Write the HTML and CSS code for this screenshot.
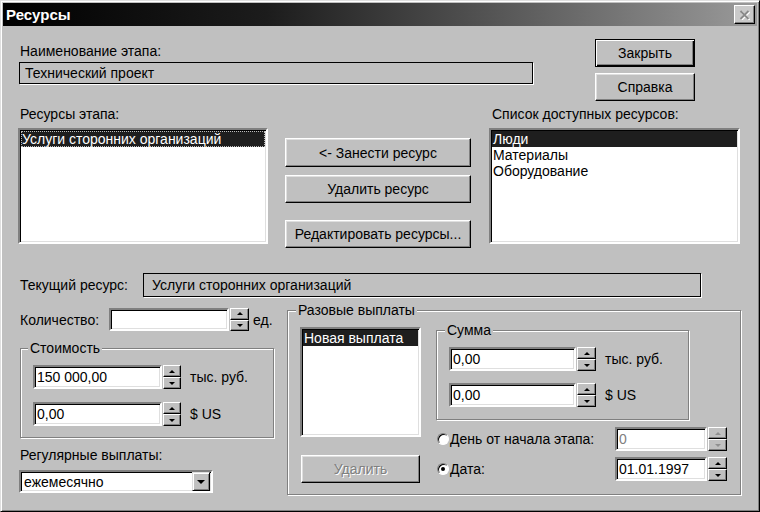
FILE: index.html
```html
<!DOCTYPE html>
<html>
<head>
<meta charset="utf-8">
<link rel="stylesheet" href="styles.css">
</head>
<body>

<div class="window">
  <div class="titlebar">
    <span class="title">Ресурсы</span>
    <div class="close">
      <svg width="11" height="10" viewBox="0 0 11 10"><path d="M1.5 1 L9.5 9 M9.5 1 L1.5 9" stroke="#fff" stroke-width="1.8" transform="translate(1,1)"/><path d="M1.5 1 L9.5 9 M9.5 1 L1.5 9" stroke="#8a8a8a" stroke-width="1.8"/></svg>
    </div>
  </div>

  <div class="client">
    <div class="row row-top">
      <div class="col-name">
        <div class="label">Наименование этапа:</div>
        <div class="static static-name">Технический проект</div>
      </div>
      <div class="col-btns">
        <button class="btn default">Закрыть</button>
        <button class="btn">Справка</button>
      </div>
    </div>

    <div class="row row-lists">
      <div class="col-list col-list-left">
        <div class="label">Ресурсы этапа:</div>
        <div class="listbox list-stage">
          <div class="item selected focused">Услуги сторонних организаций</div>
        </div>
      </div>
      <div class="col-mid">
        <button class="btn btn-add">&lt;- Занести ресурс</button>
        <button class="btn btn-del">Удалить ресурс</button>
        <button class="btn btn-edit">Редактировать ресурсы...</button>
      </div>
      <div class="col-list col-list-right">
        <div class="label">Список доступных ресурсов:</div>
        <div class="listbox list-avail">
          <div class="item selected">Люди</div>
          <div class="item">Материалы</div>
          <div class="item">Оборудование</div>
        </div>
      </div>
    </div>

    <div class="row row-current">
      <div class="label label-current">Текущий ресурс:</div>
      <div class="static static-current">Услуги сторонних организаций</div>
    </div>

    <div class="row row-bottom">
      <div class="col-left">
        <div class="qty-row">
          <div class="label label-qty">Количество:</div>
          <input class="edit edit-qty" type="text" value="">
          <div class="spin"><span class="spin-btn up"></span><span class="spin-btn down"></span></div>
          <span class="unit-qty">ед.</span>
        </div>

        <fieldset class="group group-cost">
          <legend>Стоимость</legend>
          <div class="money-row">
            <input class="edit edit-money" type="text" value="150 000,00">
            <div class="spin"><span class="spin-btn up"></span><span class="spin-btn down"></span></div>
            <span class="unit">тыс. руб.</span>
          </div>
          <div class="money-row second">
            <input class="edit edit-money" type="text" value="0,00">
            <div class="spin"><span class="spin-btn up"></span><span class="spin-btn down"></span></div>
            <span class="unit">$ US</span>
          </div>
        </fieldset>

        <div class="label label-regular">Регулярные выплаты:</div>
        <div class="combo">
          <span class="combo-text">ежемесячно</span>
          <span class="combo-btn"></span>
        </div>
      </div>

      <fieldset class="group group-once">
        <legend>Разовые выплаты</legend>
        <div class="once-body">
          <div class="once-left">
            <div class="listbox list-once">
              <div class="item selected">Новая выплата</div>
            </div>
            <button class="btn btn-remove" disabled>Удалить</button>
          </div>
          <div class="once-right">
            <fieldset class="group group-sum">
              <legend>Сумма</legend>
              <div class="money-row">
                <input class="edit edit-sum" type="text" value="0,00">
                <div class="spin"><span class="spin-btn up"></span><span class="spin-btn down"></span></div>
                <span class="unit">тыс. руб.</span>
              </div>
              <div class="money-row second">
                <input class="edit edit-sum" type="text" value="0,00">
                <div class="spin"><span class="spin-btn up"></span><span class="spin-btn down"></span></div>
                <span class="unit">$ US</span>
              </div>
            </fieldset>

            <div class="radio-row">
              <span class="radio"></span>
              <span class="radio-label">День от начала этапа:</span>
              <input class="edit edit-day disabled" type="text" value="0" disabled>
              <div class="spin disabled"><span class="spin-btn up"></span><span class="spin-btn down"></span></div>
            </div>
            <div class="radio-row second">
              <span class="radio checked"></span>
              <span class="radio-label">Дата:</span>
              <input class="edit edit-day" type="text" value="01.01.1997">
              <div class="spin"><span class="spin-btn up"></span><span class="spin-btn down"></span></div>
            </div>
          </div>
        </div>
      </fieldset>
    </div>
  </div>
</div>

</body>
</html>
```

FILE: styles.css
```css
*, *:before, *:after {
  box-sizing: border-box;
}

body {
  margin: 0;
  background: #c0c0c0;
  font: 14px/16px "Liberation Sans", Arial, sans-serif;
  color: #000;
}

.window {
  width: 760px;
  height: 512px;
  background: #c0c0c0;
  border: 1px solid;
  border-color: #dfdfdf #000 #000 #dfdfdf;
  box-shadow: inset 1px 1px #fff, inset -1px -1px #808080;
  padding: 2px;
}

/* title bar */
.titlebar {
  height: 23px;
  display: flex;
  align-items: center;
  justify-content: space-between;
  padding: 0 2px 0 3px;
  background: linear-gradient(to right, #000 0%, #1c1c1c 35%, #555 65%, #9a9a9a 100%);
  color: #fff;
}
.title {
  font-weight: bold;
  font-size: 15px;
}
.close {
  width: 21px;
  height: 19px;
  display: flex;
  align-items: center;
  justify-content: center;
  background: #cacaca;
  border: 1px solid;
  border-color: #fff #000 #000 #fff;
  box-shadow: inset -1px -1px #808080;
}

/* common controls */
.label {
  height: 16px;
  white-space: nowrap;
}

.btn {
  display: block;
  font: inherit;
  color: #000;
  padding: 0;
  background: #c0c0c0;
  border: 1px solid;
  border-color: #fff #000 #000 #fff;
  box-shadow: inset -1px -1px #808080, inset 1px 1px #dfdfdf;
}
.btn.default {
  border-color: #000;
  box-shadow: inset 1px 1px #fff, inset -1px -1px #000, inset -2px -2px #808080;
}
.btn:disabled {
  color: #808080;
  text-shadow: 1px 1px #fff;
}

.static {
  display: flex;
  align-items: center;
  border: 1px solid #000;
  box-shadow: 1px 1px #fff;
  white-space: nowrap;
}

.edit {
  display: block;
  font: inherit;
  color: #000;
  height: 24px;
  padding: 0 2px;
  background: #fff;
  border: 2px solid;
  border-color: #808080 #fff #fff #808080;
  box-shadow: inset 1px 1px #000, inset -1px -1px #dfdfdf;
  outline: none;
}
.edit.disabled {
  color: #808080;
  -webkit-text-fill-color: #808080;
}

.listbox {
  background: #fff;
  border: 2px solid;
  border-color: #808080 #fff #fff #808080;
  box-shadow: inset 1px 1px #000, inset -1px -1px #dfdfdf;
  padding: 1px;
}
.listbox .item {
  height: 16px;
  padding-left: 1px;
  white-space: nowrap;
}
.listbox .item.selected {
  background: #1e1e1e;
  color: #fff;
}
.listbox .item.focused {
  outline: 1px dotted #bbb;
  outline-offset: -1px;
}

.spin {
  display: flex;
  flex-direction: column;
  width: 18px;
  height: 24px;
  margin-left: 1px;
}
.spin-btn {
  flex: 1;
  display: flex;
  align-items: center;
  justify-content: center;
  background: #c0c0c0;
  border: 1px solid;
  border-color: #fff #000 #000 #fff;
  box-shadow: inset -1px -1px #808080;
}
.spin-btn.up:before {
  content: "";
  border-left: 3px solid transparent;
  border-right: 3px solid transparent;
  border-bottom: 3px solid #000;
}
.spin-btn.down:before {
  content: "";
  border-left: 3px solid transparent;
  border-right: 3px solid transparent;
  border-top: 3px solid #000;
}
.spin.disabled .spin-btn.up:before {
  border-bottom-color: #909090;
}
.spin.disabled .spin-btn.down:before {
  border-top-color: #909090;
}

.group {
  margin: 0;
  padding: 0 0 0 7px;
  min-width: 0;
  border: 1px solid #808080;
  box-shadow: 1px 1px #fff, inset 1px 1px #fff;
}
.group legend {
  padding: 0 2px;
  height: 16px;
  background: #c0c0c0;
}

.unit {
  margin-left: 9px;
  white-space: nowrap;
}

/* rows */
.row {
  display: flex;
}

.row-top {
  margin-top: 13px;
}
.col-name {
  margin-left: 16px;
  width: 514px;
  padding-top: 4px;
}
.col-name .label {
  padding-left: 1px;
}
.static-name {
  margin-top: 3px;
  height: 22px;
  padding-left: 5px;
}
.col-btns {
  margin-left: 62px;
  display: flex;
  flex-direction: column;
  gap: 6px;
}
.col-btns .btn {
  width: 100px;
  height: 28px;
}

.row-lists {
  margin-top: 5px;
}
.col-list-left {
  margin-left: 15px;
  width: 250px;
}
.col-list-left .label {
  padding-left: 2px;
}
.col-list .listbox {
  margin-top: 6px;
  height: 116px;
}
.col-mid {
  margin-left: 17px;
  width: 186px;
  padding-top: 32px;
}
.col-mid .btn {
  width: 186px;
  height: 28px;
}
.col-mid .btn-add {
  height: 29px;
}
.col-mid .btn-del {
  margin-top: 8px;
}
.col-mid .btn-edit {
  margin-top: 17px;
}
.col-list-right {
  margin-left: 18px;
  width: 251px;
}
.col-list-right .label {
  padding-left: 3px;
}

.row-current {
  margin-top: 25px;
  align-items: center;
}
.label-current {
  margin-left: 17px;
  width: 123px;
}
.static-current {
  width: 558px;
  height: 24px;
  padding-left: 8px;
}

.row-bottom {
  margin-top: 5px;
  align-items: flex-start;
}

/* left column */
.col-left {
  width: 272px;
  padding-top: 6px;
}
.qty-row {
  display: flex;
  align-items: center;
  height: 23px;
}
.label-qty {
  margin-left: 17px;
  width: 89px;
}
.edit-qty {
  width: 120px;
  height: 23px;
}
.qty-row .spin {
  width: 19px;
  height: 23px;
}
.unit-qty {
  margin-left: 4px;
}

.group-cost {
  margin: 9px 0 0 17px;
  width: 254px;
  height: 98px;
}
.money-row {
  display: flex;
  align-items: center;
  padding-left: 5px;
  margin-top: 9px;
}
.money-row.second {
  margin-top: 13px;
}
.edit-money {
  width: 129px;
}

.label-regular {
  margin: 9px 0 0 17px;
}
.combo {
  display: flex;
  align-items: center;
  margin: 7px 0 0 16px;
  width: 194px;
  height: 23px;
  background: #fff;
  border: 2px solid;
  border-color: #808080 #fff #fff #808080;
  box-shadow: inset 1px 1px #000, inset -1px -1px #dfdfdf;
  padding: 1px;
}
.combo-text {
  flex: 1;
  padding-left: 2px;
}
.combo-btn {
  width: 18px;
  height: 19px;
  display: flex;
  align-items: center;
  justify-content: center;
  background: #c0c0c0;
  border: 1px solid;
  border-color: #dfdfdf #000 #000 #dfdfdf;
  box-shadow: inset 1px 1px #fff, inset -1px -1px #808080;
}
.combo-btn:before {
  content: "";
  border-left: 4px solid transparent;
  border-right: 4px solid transparent;
  border-top: 4px solid #000;
}

/* one-time payments */
.group-once {
  margin-left: 12px;
  width: 454px;
  height: 193px;
  padding-left: 8px;
}
.once-body {
  display: flex;
}
.once-left {
  margin-left: 4px;
  width: 121px;
}
.list-once {
  margin-top: 9px;
  height: 110px;
}
.btn-remove {
  margin: 18px 0 0 1px;
  width: 119px;
  height: 28px;
}
.once-right {
  margin-left: 15px;
}
.group-sum {
  margin-top: 4px;
  width: 253px;
  height: 98px;
  padding-left: 8px;
}
.group-sum .money-row {
  padding-left: 4px;
}
.group-sum .money-row.second {
  margin-top: 12px;
}
.edit-sum {
  width: 127px;
}
.group-sum .spin {
  width: 19px;
}

.radio-row {
  display: flex;
  align-items: center;
  height: 24px;
  margin-top: 7px;
}
.radio-row.second {
  margin-top: 6px;
}
.radio {
  margin-left: 1px;
  width: 12px;
  height: 12px;
  border-radius: 50%;
  background: #fff;
  border: 1px solid;
  border-color: #808080 #fff #fff #808080;
  box-shadow: inset 1px 1px #000;
  display: flex;
  align-items: center;
  justify-content: center;
}
.radio.checked:after {
  content: "";
  width: 4px;
  height: 4px;
  border-radius: 50%;
  background: #000;
}
.radio-label {
  margin-left: 1px;
  width: 165px;
  white-space: nowrap;
}
.edit-day {
  width: 92px;
}
.radio-row .spin {
  width: 19px;
}
```
